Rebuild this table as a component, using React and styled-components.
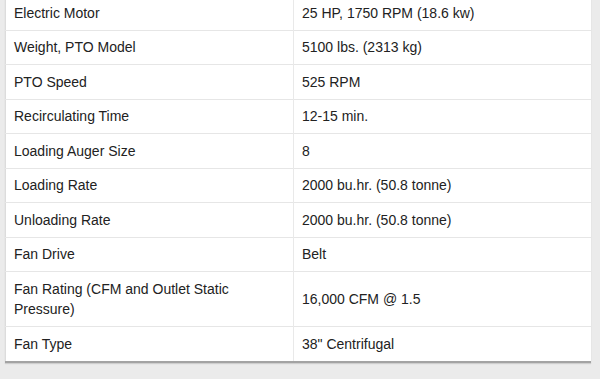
import React from 'react'
import styled, { createGlobalStyle } from 'styled-components'

const specs = [
  ['Electric Motor', '25 HP, 1750 RPM (18.6 kw)'],
  ['Weight, PTO Model', '5100 lbs. (2313 kg)'],
  ['PTO Speed', '525 RPM'],
  ['Recirculating Time', '12-15 min.'],
  ['Loading Auger Size', '8'],
  ['Loading Rate', '2000 bu.hr. (50.8 tonne)'],
  ['Unloading Rate', '2000 bu.hr. (50.8 tonne)'],
  ['Fan Drive', 'Belt'],
  ['Fan Rating (CFM and Outlet Static Pressure)', '16,000 CFM @ 1.5'],
  ['Fan Type', '38" Centrifugal'],
]

const GlobalStyle = createGlobalStyle`
html, body {
  margin: 0;
  background: #ebebeb;
}
body {
  font-family: "Liberation Sans", Arial, sans-serif;
  color: #222;
}
`

const Page = styled.div`
padding: 0 9px 0 5px;
height: 379px;
overflow: hidden;
`

const SpecTable = styled.table`
width: 100%;
margin-top: -4px;
table-layout: fixed;
border-collapse: collapse;
background: #fff;
border-left: 1px solid #dcdcdc;
border-bottom: 2px solid #a3a3a3;
box-shadow: 0 1px 1px rgba(0,0,0,0.12);
font-size: 14px;
line-height: 20.5px;
`

const Row = styled.tr`
border-bottom: 1px solid #e6e6e6;
&:last-child {
  border-bottom: none;
}
`

const Cell = styled.td`
padding: 6.5px 8px;
vertical-align: middle;
border-left: ${p => p.value ? '1px solid #e9e9e9' : 'none'};
`

const App = () => {
  return (
    <Page>
      <GlobalStyle />
      <SpecTable>
        <colgroup>
          <col style={{ width: '288px' }} />
          <col />
        </colgroup>
        <tbody>
          {specs.map(([label, value]) => (
            <Row key={label}>
              <Cell>{label}</Cell>
              <Cell value>{value}</Cell>
            </Row>
          ))}
        </tbody>
      </SpecTable>
    </Page>
  )
}

export default App
